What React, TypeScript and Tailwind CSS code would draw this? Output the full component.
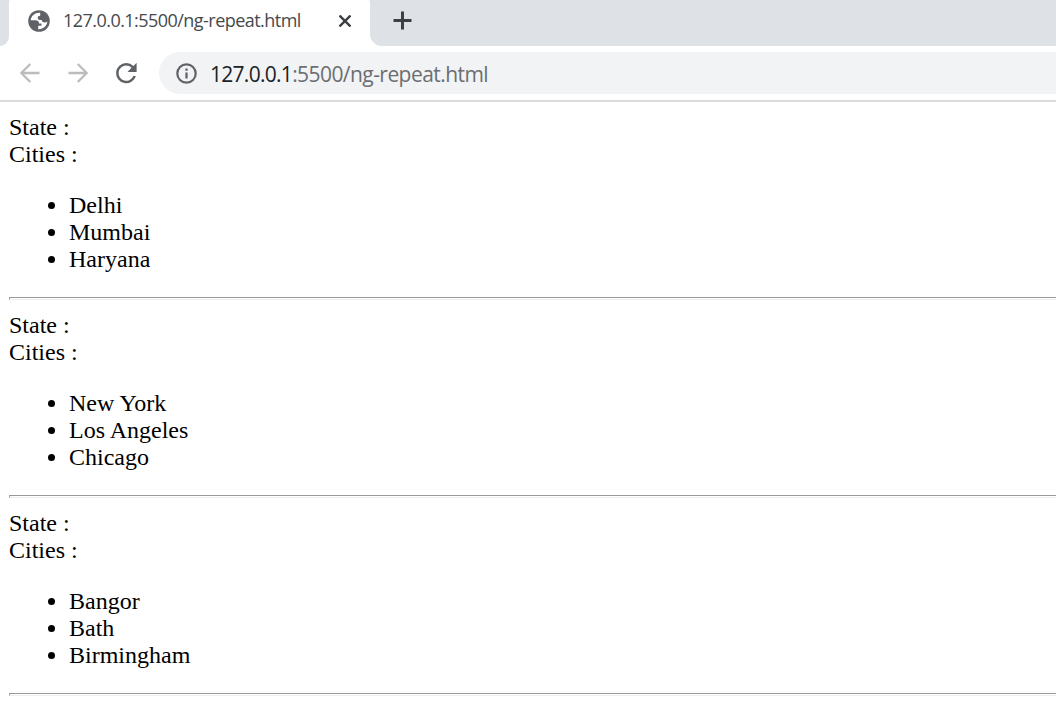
import type { ReactNode } from "react"

const groups = [
  { id: 1, cities: ["Delhi", "Mumbai", "Haryana"] },
  { id: 2, cities: ["New York", "Los Angeles", "Chicago"] },
  { id: 3, cities: ["Bangor", "Bath", "Birmingham"] },
]

function GlobeIcon() {
  return (
    <svg className="h-[22px] w-[22px] shrink-0" viewBox="0 0 22 22">
      <circle cx="11" cy="11" r="10.8" fill="#5f6368" />
      <path
        d="M12.2 2.7C7.2 2.2 3 5.8 2.7 10.2h4.8c2.2 0 3.6 1.2 3.6 3.3h2.4v2.3h-3.3v3.4c4.9.4 8.8-3.2 9.1-7.6-.8.7-1.8 1-3 .9-1.6-.1-2.4-.9-2.5-2.4-2.3.1-4.1-.5-4.1-2.2 0-1.4.8-2.2 2.5-2.2z"
        fill="#fff"
      />
    </svg>
  )
}

function NavButton({ children, label }: { children: ReactNode; label: string }) {
  return (
    <button aria-label={label} className="flex h-6 w-6 shrink-0 items-center justify-center">
      {children}
    </button>
  )
}

function TabStrip() {
  return (
    <div className="flex h-[46px] overflow-hidden bg-white">
      <div className="w-[9px] shrink-0 rounded-br-[9px] bg-[#dee1e6]" />
      <div className="w-[361px] shrink-0 bg-[#dee1e6]">
        <div className="-mt-2 flex h-[54px] items-center rounded-t-xl bg-white pt-1 pl-[19px]">
          <GlobeIcon />
          <span className="mb-0.5 ml-[13px] w-[261px] font-['Open_Sans',sans-serif] text-[18px] leading-6 tracking-[-0.54px] whitespace-nowrap text-[#45494d]">
            127.0.0.1:5500/ng-repeat.html
          </span>
          <svg className="ml-[15px] h-3 w-3" viewBox="0 0 12 12" stroke="#3c4043" strokeWidth="2.4">
            <path d="M.5.5l11 11M11.5.5l-11 11" />
          </svg>
        </div>
      </div>
      <div className="flex-1 rounded-bl-xl bg-[#dee1e6] pt-[11px] pl-[22.5px]">
        <svg className="h-[19px] w-[19px]" viewBox="0 0 19 19" stroke="#3c4043" strokeWidth="3">
          <path d="M9.5.5v18M.5 9.5h18" />
        </svg>
      </div>
    </div>
  )
}

function Toolbar() {
  return (
    <div className="flex h-[56px] items-center border-b-2 border-[#dadbdc] bg-white pl-[18px]">
      <NavButton label="Back">
        <svg className="h-5 w-5" viewBox="0 0 20 20" fill="none" stroke="#babcbe" strokeWidth="2.3">
          <path d="M19.5 10H1.5M10.3 1L1.3 10l9 9" />
        </svg>
      </NavButton>
      <div className="w-6" />
      <NavButton label="Forward">
        <svg className="h-5 w-5" viewBox="0 0 20 20" fill="none" stroke="#babcbe" strokeWidth="2.3">
          <path d="M.5 10h18M9.7 1l9 9-9 9" />
        </svg>
      </NavButton>
      <div className="w-6" />
      <NavButton label="Reload">
        <svg className="h-[30px] w-[30px] shrink-0" viewBox="0 0 24 24" fill="#5f6368">
          <path d="M17.95 6.35A8.2 8.2 0 0 0 12.1 4a8.1 8.1 0 1 0 7.83 10.3h-2.08A6.1 6.1 0 1 1 12.1 6c1.66 0 3.14.69 4.3 1.88L13.2 11.1h7.3V3.8z" />
        </svg>
      </NavButton>
      <div className="ml-[21px] flex h-[42px] flex-1 items-center rounded-l-full bg-[#f1f3f4] pl-[17px]">
        <svg className="h-[21px] w-[21px] shrink-0" viewBox="0 0 21 21" fill="none" stroke="#5f6368">
          <circle cx="10.5" cy="10.5" r="9.2" strokeWidth="2.2" />
          <path d="M10.5 9.5v6M10.5 5.5v2.3" strokeWidth="2.3" />
        </svg>
        <span className="mt-px ml-[13px] font-['Open_Sans',sans-serif] text-[21px] leading-7 tracking-[-0.56px] whitespace-nowrap text-[#6b6e72]">
          <span className="tracking-[-0.72px] text-[#202124]">127.0.0.1</span>:5500/ng-repeat.html
        </span>
      </div>
    </div>
  )
}

export default function App() {
  return (
    <div className="h-[707px] w-[1056px] overflow-hidden bg-white">
      <TabStrip />
      <Toolbar />
      <main className="pt-3 pl-[9px] font-['Liberation_Serif',serif] text-[24px] leading-[27px] text-black">
        {groups.map((group) => (
          <section key={group.id}>
            <div>State :</div>
            <div>Cities :</div>
            <ul className="my-6 list-disc pl-[60px]">
              {group.cities.map((city) => (
                <li key={city}>{city}</li>
              ))}
            </ul>
            <hr className="mb-3 h-[3px] border border-r-0 border-t-[#9a9a9a] border-b-[#eeeeee] border-l-[#9a9a9a]" />
          </section>
        ))}
      </main>
    </div>
  )
}
